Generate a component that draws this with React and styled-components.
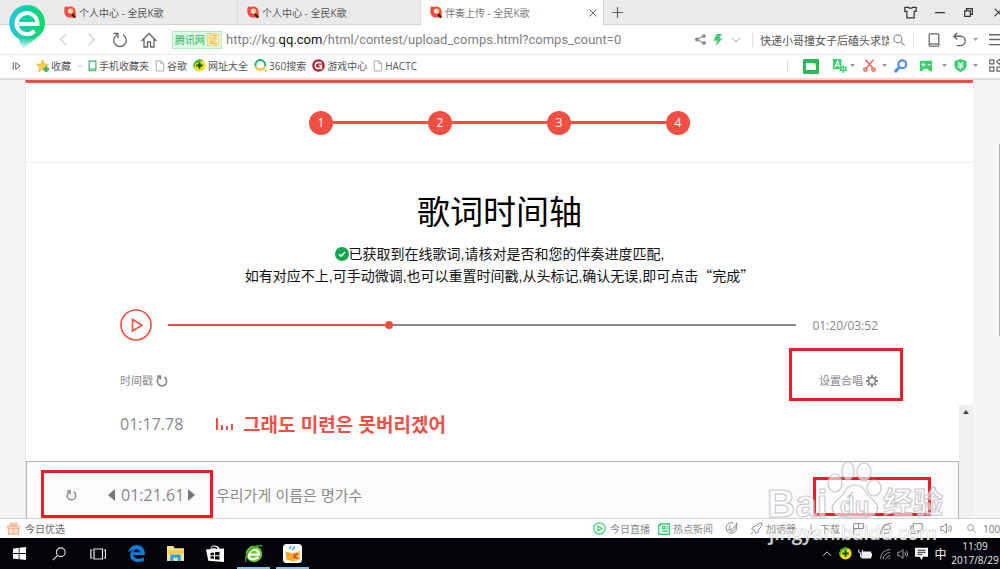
import React from "react";
import styled, { createGlobalStyle } from "styled-components";

const GlobalStyle = createGlobalStyle`
  * { box-sizing: border-box; }
  body { margin: 0; background: #fff; }
  body, button, input { font-family: "Open Sans", "Noto Sans CJK SC", sans-serif; }
  button { border: 0; padding: 0; margin: 0; background: none; color: inherit; font-size: inherit; line-height: inherit; }
  svg { display: block; flex: none; }
`;

const red = "#f14f43";
const green = "#3ccf6e";

/* ---------- shells ---------- */

const Shell = styled.div`
  position: relative;
  display: flex;
  flex-direction: column;
  height: 100vh;
  overflow: hidden;
  white-space: nowrap;
  color: #666;
`;

const Cell = styled.button`
  display: flex;
  flex: none;
  align-items: center;
  justify-content: center;
  width: ${(p) => p.$w}px;
  height: 100%;
  color: ${(p) => p.$color || "#666"};
`;

const Cropped = styled.div`
  display: flex;
  flex: none;
  width: ${(p) => p.$w}px;
  overflow: hidden;
  align-items: center;
`;

const Gap = styled.span`
  flex: none;
  width: ${(p) => p.$w}px;
`;

const Spacer = styled.div`
  flex: 1;
`;

const Divider = styled.div`
  flex: none;
  width: 1px;
  height: ${(p) => p.$h || 14}px;
  background: #dedede;
`;

const BrowserLogo = styled.div`
  position: absolute;
  left: 8px;
  top: 4px;
  z-index: 2;
`;

const TabBar = styled.nav`
  display: flex;
  flex: none;
  align-items: stretch;
  height: 25px;
  padding-left: 55px;
  background: #eaeaea;
  border-bottom: 1px solid #d2d2d2;
`;

const Tab = styled.div`
  display: flex;
  align-items: center;
  gap: 3px;
  width: 183px;
  padding: 0 5px 0 9px;
  font-size: 10px;
  color: ${(p) => (p.$active ? "#777" : "#555")};
  background: ${(p) => (p.$active ? "#fff" : "transparent")};
  border-right: 1px solid ${(p) => (p.$active ? "#d2d2d2" : "#dcdcdc")};
  margin-bottom: ${(p) => (p.$active ? "-1px" : "0")};
`;

const TabTitle = styled.span`
  flex: 1;
`;

const AddressBar = styled.header`
  display: flex;
  flex: none;
  align-items: center;
  height: 30px;
  padding-left: 50px;
  background: #fff;
  border-bottom: 1px solid #ebebeb;
`;

const SiteBadge = styled.span`
  display: flex;
  align-items: center;
  gap: 2px;
  height: 18px;
  margin: 0 4px 0 9px;
  padding: 0 2px;
  font-size: 10px;
  color: #35b26b;
  background: #dcfae2;
  border: 1px solid #b4ebc2;
`;

const Verified = styled.span`
  line-height: 11px;
  color: #e9b23c;
  background: #fff0b8;
  border: 1px solid #f3d480;
`;

const Url = styled.div`
  flex: 1;
  overflow: hidden;
  font-family: Roboto, sans-serif;
  font-size: 13px;
  line-height: 20px;
  color: #808080;
  b { font-weight: 400; color: #111; }
`;

const SearchInput = styled.input`
  width: 129px;
  margin: 0 4px 0 1px;
  padding: 0;
  border: 0;
  outline: 0;
  font-size: 11px;
  color: #555;
  background: transparent;
`;

const BookmarkBar = styled.nav`
  display: flex;
  flex: none;
  align-items: center;
  gap: 6px;
  height: 25px;
  padding: 0 0 2px 12px;
  background: #fff;
  border-bottom: 2px solid #dcdcdc;
  font-size: 10px;
`;

const Bookmark = styled.a`
  display: flex;
  align-items: center;
  gap: 2px;
  color: #555;
  text-decoration: none;
`;

const Tools = styled.div`
  display: flex;
  align-items: center;
  height: 22px;
`;

/* ---------- page ---------- */

const Viewport = styled.div`
  display: flex;
  flex: 1;
  min-height: 0;
  padding-left: 25px;
  background: #f5f5f5;
`;

const PageScroll = styled.div`
  display: flex;
  justify-content: flex-end;
  width: 27px;
  flex: none;
  padding-top: 64px;
`;

const PageThumb = styled.div`
  width: 1px;
  height: 192px;
  background: #b0b0b0;
`;

const Content = styled.main`
  display: flex;
  flex-direction: column;
  flex: 1;
  min-width: 0;
  background: #fff;
  border-top: 3px solid ${red};
  border-left: 1px solid #e8e8e8;
`;

const Steps = styled.ol`
  display: flex;
  flex: none;
  align-items: center;
  justify-content: center;
  height: 80px;
  margin: 0;
  padding: 0;
  list-style: none;
  border-bottom: 1px solid #ececec;
`;

const Step = styled.li`
  display: flex;
  align-items: center;
  &:not(:first-child)::before {
    content: "";
    width: 95px;
    height: 3px;
    background: ${red};
  }
`;

const StepDot = styled.span`
  width: 24px;
  height: 24px;
  border-radius: 12px;
  font-size: 12px;
  line-height: 24px;
  text-align: center;
  color: #fff;
  background: ${red};
`;

const Title = styled.h1`
  margin: 27px 0 10px;
  font-size: 33px;
  font-weight: 400;
  line-height: 44px;
  text-align: center;
  color: #000;
`;

const Hint = styled.p`
  margin: 0;
  font-family: "Liberation Sans", "Noto Sans CJK SC", sans-serif;
  font-size: 14px;
  line-height: 21px;
  text-align: center;
  color: #111;
  svg { display: inline-block; vertical-align: -2px; }
`;

const Quote = styled.span`
  font-family: "Noto Sans CJK SC", sans-serif;
`;

const Player = styled.div`
  display: flex;
  align-items: center;
  margin: 22px 95px 32px 94px;
  font-size: 12px;
  color: #888;
`;

const Track = styled.div`
  display: flex;
  align-items: center;
  flex: 1;
  margin: 0 16px;
  height: 8px;
`;

const Played = styled.div`
  height: 2px;
  background: ${red};
`;

const Knob = styled.div`
  width: 8px;
  height: 8px;
  border-radius: 4px;
  background: ${red};
`;

const Remaining = styled.div`
  flex: 1;
  height: 2px;
  background: #8c8c8c;
`;

const ListHead = styled.div`
  display: flex;
  justify-content: space-between;
  margin: 0 95px 16px 94px;
  font-size: 11px;
  line-height: 16px;
  color: #888;
`;

const HeadButton = styled.button`
  position: relative;
  display: flex;
  align-items: center;
  gap: 3px;
`;

const Highlight = styled.span`
  position: absolute;
  inset: ${(p) => p.$inset};
  width: ${(p) => (p.$w ? `${p.$w}px` : "auto")};
  border: 3px solid #ed1c24;
  pointer-events: none;
`;

const ListArea = styled.div`
  display: flex;
  flex: 1;
  min-height: 0;
`;

const Lyrics = styled.div`
  display: flex;
  flex-direction: column;
  flex: 1;
`;

const Scrollbar = styled.div`
  display: flex;
  justify-content: center;
  width: 14px;
  padding-top: 5px;
  background: #f0f0f0;
`;

const LyricRow = styled.div`
  display: flex;
  align-items: center;
  height: 56px;
  padding: 0 0 18px 94px;
`;

const NextRow = styled.div`
  position: relative;
  display: flex;
  flex: 1;
  align-items: center;
  padding: 10px 101px 0 39px;
  background: #fbfbfd;
  border: 1px solid #b4b4b8;
  border-bottom: 0;
`;

const Time = styled.span`
  width: ${(p) => p.$w}px;
  font-size: 16px;
  line-height: 24px;
  color: #888;
`;

const Lyric = styled.span`
  font-family: "Noto Sans CJK KR", sans-serif;
  font-size: ${(p) => (p.$current ? 19 : 15)}px;
  font-weight: ${(p) => (p.$current ? 700 : 400)};
  line-height: 24px;
  margin-left: ${(p) => (p.$current ? 10 : 21)}px;
  color: ${(p) => (p.$current ? red : "#8a8a8a")};
  flex: 1;
`;

/* ---------- bottom bars ---------- */

const StatusBar = styled.footer`
  display: flex;
  flex: none;
  align-items: center;
  height: 20px;
  padding-left: 7px;
  background: #fff;
  border-top: 1px solid #d4d4d4;
  font-size: 10px;
  color: #777;
`;

const StatusItem = styled.button`
  display: flex;
  align-items: center;
  gap: ${(p) => p.$gap || 4}px;
  margin-right: ${(p) => p.$after || 0}px;
  color: ${(p) => p.$color || "#888"};
`;

const Taskbar = styled.footer`
  display: flex;
  flex: none;
  align-items: stretch;
  height: 31px;
  background: #02040a;
  color: #e8e8e8;
  font-size: 12px;
`;

const TaskButton = styled.button`
  display: flex;
  align-items: center;
  justify-content: center;
  width: 39px;
  position: relative;
  &::after {
    content: "";
    display: ${(p) => (p.$open ? "block" : "none")};
    position: absolute;
    left: 3px;
    right: 3px;
    bottom: 0;
    height: 2px;
    background: #86bfe8;
  }
`;

const Clock = styled.div`
  flex: none;
  width: 50px;
  padding: 1px 0;
  display: flex;
  flex-direction: column;
  align-items: center;
  font-size: 10px;
  line-height: 14px;
`;

const Watermark = styled.div`
  position: absolute;
  right: 50px;
  bottom: 18px;
  pointer-events: none;
`;

/* ---------- icons ---------- */

function Icon({ w = 16, h, box = 16, sw = 1.2, fill = "none", children }) {
  return (
    <svg width={w} height={h || w} viewBox={`0 0 ${box} ${h && box === 16 ? (16 * h) / w : box}`} fill={fill}
      stroke={fill === "none" ? "currentColor" : "none"} strokeWidth={sw} aria-hidden="true">
      {children}
    </svg>
  );
}

const Caret = () => (
  <svg width="5" height="3" viewBox="0 0 5 3" aria-hidden="true"><path d="M0 0h5L2.500 3z" fill="#999" /></svg>
);

const Favicon = () => (
  <svg width="12" height="13" viewBox="0 0 12 13" aria-hidden="true">
    <path d="M1 0.500Q4 1 7 .5Q11 1 11.500 5L12 12L7 11.500Q1 12 .3 6Q0 3 1 .5Z" fill="#ee4c41" />
    <circle cx="6.500" cy="5" r="2.600" fill="#ffe6da" />
    <circle cx="7.800" cy="4.500" r="1.600" fill="#f7c93d" />
    <path d="M8 8l3 3.500" stroke="#43201e" strokeWidth="2" />
  </svg>
);

const Doc = () => (
  <Icon w={10} h={12} sw={1.3}><path d="M2 1.500h7.500l4.500 4.500v11.500H2zM9.500 1.500V6H14" stroke="#999" /></Icon>
);

const Chevron = ({ w = 10, dir = "down" }) => (
  <Icon w={w} box={16} sw={1.5}>
    <path d={{ down: "M1.500 4.500L8 11l6.500-6.500", left: "M11.500 1L4.500 8l7 7", right: "M4.500 1l7 7-7 7", up: "M1.500 11L8 4.500l6.500 6.500" }[dir]} />
  </Icon>
);

const Magnifier = ({ w = 12 }) => (
  <Icon w={w} sw={1.5}><circle cx="6.500" cy="6.500" r="5.300" /><path d="M10.500 10.500l5 5" /></Icon>
);

const Reload = ({ w = 12, sw = 2 }) => (
  <Icon w={w} sw={sw}><path d="M11 2.700A6.300 6.300 0 1 1 5 2.700M1.500 1.500H6v4.500" /></Icon>
);

const Plus360 = ({ w = 13 }) => (
  <svg width={w} height={w} viewBox="0 0 16 16" aria-hidden="true">
    <circle cx="8" cy="8" r="7.500" fill="#f9dc18" />
    <path d="M13 2.500A7.500 7.500 0 0 0 2 12.500Q1 6 6 4T13 2.500Z" fill="#38b435" />
    <path d="M8 4v8M4 8h8" stroke="#075b16" strokeWidth="2.400" />
  </svg>
);

const Gear = () => (
  <Icon w={12}>
    <circle cx="8" cy="8" r="4.500" strokeWidth="2.200" />
    <path d="M8 0v3M8 13v3M0 8h3M13 8h3M2.300 2.300l2.200 2.200M11.500 11.500l2.200 2.200M2.300 13.700l2.200-2.200M11.500 4.500l2.200-2.200" strokeWidth="2.800" />
  </Icon>
);

const Speaker = ({ w = 13 }) => (
  <Icon w={w}><path d="M1 5.500h3L8 2v12l-4-3.500H1zM10.500 5.500q2 2.500 0 5M12.500 3.500q3.500 4.500 0 9" /></Icon>
);

const Shirt = () => (
  <Icon w={13} sw={1.5}><path d="M5 1.500q3 2.500 6 0l4 .5v4.500h-2.500v8h-9v-8H1V2z" /></Icon>
);

const Bars = () => (
  <svg width="18" height="14" viewBox="0 0 18 14" aria-hidden="true">
    <path d="M2 1v12M7 8v5M12 9v4M17 7v6" stroke={red} strokeWidth="2" />
  </svg>
);

const Triangle = ({ right }) => (
  <svg width="7" height="12" viewBox="0 0 7 12" aria-hidden="true"><path d={right ? "M0 0v12l7-6z" : "M7 0v12L0 6z"} fill="#777" /></svg>
);

const tabs = ["个人中心 - 全民K歌", "个人中心 - 全民K歌", "伴奏上传 - 全民K歌"];

export default function App() {
  return (
    <Shell>
      <GlobalStyle />

      <BrowserLogo>
        <svg width="38" height="45" viewBox="0 0 38 45" role="img" aria-label="360">
          <defs>
            <linearGradient id="pin" x1="0" y1="0.400" x2="1" y2="0.500">
              <stop offset="0" stopColor="#25c6df" /><stop offset=".6" stopColor="#12d295" /><stop offset="1" stopColor="#08dc63" />
            </linearGradient>
            <linearGradient id="tail" x1="0" y1="0" x2="0" y2="1">
              <stop offset=".75" stopColor="#fff" /><stop offset="1" stopColor="#fff" stopOpacity="0" />
            </linearGradient>
            <mask id="fade"><rect width="38" height="45" fill="url(#tail)" /></mask>
          </defs>
          <path mask="url(#fade)" d="M19 1a18 18 0 0 1 18 18q0 7-5 12L15 45Q12 40 11 35A18 18 0 0 1 19 1z" fill="url(#pin)" />
          <path d="M11 20H29.500A10.500 10.500 0 1 0 26.500 27" fill="none" stroke="#fff" strokeWidth="4" />
        </svg>
      </BrowserLogo>

      <TabBar>
        {tabs.map((title, i) => (
          <Tab key={i} $active={i === 2}>
            <Favicon />
            <TabTitle>{title}</TabTitle>
            {i === 2 && (
              <Cell $w={11} aria-label="关闭标签"><Icon w={8} sw={2}><path d="M1 1l14 14M15 1L1 15" /></Icon></Cell>
            )}
          </Tab>
        ))}
        <Cell $w={26} aria-label="新标签"><Icon w={11} sw={1.8}><path d="M8 0v16M0 8h16" /></Icon></Cell>
        <Spacer />
        <Cell $w={29} $color="#333" aria-label="皮肤"><Shirt /></Cell>
        <Cell $w={29} $color="#333" aria-label="最小化"><Icon w={10} sw={2}><path d="M0 9h16" /></Icon></Cell>
        <Cell $w={29} $color="#333" aria-label="还原"><Icon w={9} sw={2.2}><path d="M1.200 5h10v10h-10zM4.500 5V1.200h10.300v10h-3.500" /></Icon></Cell>
        <Cropped $w={17}>
          <Cell $w={30} $color="#333" aria-label="关闭"><Icon w={9} sw={2}><path d="M1 1l14 14M15 1L1 15" /></Icon></Cell>
        </Cropped>
      </TabBar>

      <AddressBar>
        <Cell $w={27} $color="#ccc" aria-label="后退"><Chevron w={13} dir="left" /></Cell>
        <Cell $w={28} $color="#ccc" aria-label="前进"><Chevron w={13} dir="right" /></Cell>
        <Cell $w={30} aria-label="刷新"><Reload w={16} sw={1.300} /></Cell>
        <Cell $w={28} aria-label="主页"><Icon w={16} sw={1.3}><path d="M.5 9L8 1.500 15.500 9M3 7v8h3.500v-5h3v5H13V7" /></Icon></Cell>
        <SiteBadge>腾讯网<Verified>证</Verified></SiteBadge>
        <Url role="textbox" aria-label="网址" tabIndex={0}>http://kg.<b>qq.com</b>/html/contest/upload_comps.html?comps_count=0</Url>
        <Cell $w={18} $color="#888" aria-label="分享">
          <Icon w={11} fill="currentColor"><path d="M3 8L13 2.500M3 8l10 5.500" stroke="currentColor" strokeWidth="1.500" /><circle cx="3" cy="8" r="3" /><circle cx="13" cy="3" r="2.700" /><circle cx="13" cy="13" r="2.700" /></Icon>
        </Cell>
        <Cell $w={18} $color={green} aria-label="极速模式"><Icon w={12} fill="currentColor"><path d="M6 0h7l-3 6h4L5 16l2-7H2z" /></Icon></Cell>
        <Cell $w={18} $color="#999" aria-label="更多"><Chevron w={10} /></Cell>
        <Cell as="span" $w={14}><Divider /></Cell>
        <SearchInput aria-label="搜索" defaultValue="快递小哥撞女子后磕头求饶" />
        <Cell $w={12} $color="#888" aria-label="搜索"><Magnifier w={12} /></Cell>
        <Cell as="span" $w={17}><Divider /></Cell>
        <Cell $w={24} aria-label="手机"><Icon w={14} sw={1.4}><rect x="2.500" y="1" width="11" height="14" rx="1" /><path d="M2.500 12.500h11" /></Icon></Cell>
        <Cell $w={27} aria-label="撤销">
          <Icon w={15} sw={1.5}><path d="M5.500 1L2 4.500 5.500 8M2 4.500h7a5 5 0 0 1 0 10H5" /></Icon>
        </Cell>
        <Caret />
        <Cropped $w={22}><Cell $w={36} aria-label="菜单"><Icon w={15} sw={1.500}><path d="M0 3h16M0 8h16M0 13.500h16" /></Icon></Cell></Cropped>
      </AddressBar>

      <BookmarkBar>
        <Cell $w={10} aria-label="侧栏"><Icon w={10} sw={1.600}><path d="M2 2v12M6 2.500l7 5.500-7 5.500z" /></Icon></Cell>
        <Gap $w={2} />
        <Bookmark href="#fav">
          <svg width="13" height="13" viewBox="0 0 16 16" aria-hidden="true">
            <path d="M8 1l2 5 5.500.5-4 4 1 5L8 13l-4.500 2.500 1-5-4-4L6 6z" fill="#fbd04c" stroke="#eeb52d" />
            <path d="M12.500 9v7M9 12.500h7" stroke="#39b86a" strokeWidth="3" />
          </svg>
          收藏
        </Bookmark>
        <Cell $w={5} $color="#999" aria-label="展开收藏"><Chevron w={6} /></Cell>
        <Bookmark href="#mobile"><Icon w={9} h={12} sw={2}><path d="M2 2h12v17H2zM2 16h12" stroke="#35ae6c" /></Icon>手机收藏夹</Bookmark>
        <Bookmark href="#google"><Doc />谷歌</Bookmark>
        <Bookmark href="#sites"><Plus360 />网址大全</Bookmark>
        <Bookmark href="#so">
          <svg width="13" height="13" viewBox="0 0 16 16" fill="none" strokeWidth="2.500" aria-hidden="true">
            <path d="M13.500 9A6 6 0 1 0 2 9" stroke="#22b573" /><path d="M2 9a6 6 0 0 0 11.500 0" stroke="#f8be19" /><circle cx="14.500" cy="14.500" r="1.300" fill="#f8be19" />
          </svg>
          360搜索
        </Bookmark>
        <Bookmark href="#game">
          <svg width="13" height="13" viewBox="0 0 16 16" fill="none" aria-hidden="true">
            <circle cx="8" cy="8" r="7.700" fill="#b51e2b" /><path d="M12 4.500H6Q4 5 4 8t2 3.500h5.500V8H8" stroke="#fff" strokeWidth="2" />
          </svg>
          游戏中心
        </Bookmark>
        <Bookmark href="#hactc"><Doc />HACTC</Bookmark>
        <Spacer />
        <Tools>
          <Divider $h={12} />
          <Cell $w={46} $color={green} aria-label="便签">
            <Icon w={16} fill="currentColor"><rect y="1" width="16" height="15" rx="1" fill="#2fb65b" /><path d="M3 5h10v7H3z" fill="#f3fff3" /><path d="M10 5h3v3z" fill="#f3c645" /></Icon>
          </Cell>
          <Cell $w={10} $color={green} aria-label="翻译">
            <Icon w={15} fill="currentColor"><path d="M1 1h9v11H1z" /><path d="M3 10l3-7 2 7M4 8h3" stroke="#fff" fill="none" /><path d="M9 10h6v3H9zM12 8v8" stroke="currentColor" fill="none" strokeWidth="1.500" /></Icon>
          </Cell>
          <Cell $w={17}><Caret /></Cell>
          <Cell $w={16} $color="#f2665e" aria-label="截图"><Icon w={13} sw={2}><path d="M3 1l9 10M13 1L4 11" /><circle cx="3" cy="13" r="2" /><circle cx="13" cy="13" r="2" /></Icon></Cell>
          <Cell $w={15}><Caret /></Cell>
          <Cell $w={18} $color="#4f8ff0" aria-label="查找"><Icon w={14} sw={2.500}><circle cx="9.500" cy="6" r="4.500" /><path d="M6 9.500L1 15" strokeWidth="3.500" /></Icon></Cell>
          <Cell $w={32} $color={green} aria-label="游戏"><Icon w={14} fill="currentColor"><path d="M1 2h14v12h-3l-2-3H6l-2 3H1z" /><path d="M3 6.500h4M5 4.500v4M10 6.500h3" stroke="#fff" strokeWidth="1.500" /></Icon></Cell>
          <Caret />
          <Cell $w={26} $color={green} aria-label="安全"><Icon w={13} fill="currentColor"><path d="M8 0l7.500 2.500v6Q14 14 8 16 2 14 .5 8.500v-6z" /><path d="M5 3.500l3 3.500 3-3.500M4.500 7.500h7M4.500 10h7M8 7v6" stroke="#fff" strokeWidth="1.300" fill="none" /></Icon></Cell>
          <Caret />
          <Cropped $w={22}><Cell $w={34} aria-label="应用"><Icon w={13} sw={1.500}><path d="M1 1h5v5H1zM1 10h5v5H1zM10 10h5v5h-5zM12.500 .5l3 3-3 3-3-3z" /></Icon></Cell></Cropped>
        </Tools>
      </BookmarkBar>

      <Viewport>
        <Content>
          <Steps>
            {[1, 2, 3, 4].map((n) => <Step key={n}><StepDot>{n}</StepDot></Step>)}
          </Steps>
          <Title>歌词时间轴</Title>
          <Hint>
            <svg width="14" height="14" viewBox="0 0 14 14" aria-hidden="true"><circle cx="7" cy="7" r="7" fill="#13a650" /><path d="M4 7.200l2 2L10 5" fill="none" stroke="#fff" strokeWidth="1.500" /></svg>
            已获取到在线歌词,请核对是否和您的伴奏进度匹配,<br />
            如有对应不上,可手动微调,也可以重置时间戳,从头标记,确认无误,即可点击<Quote>“完成”</Quote>
          </Hint>
          <Player>
            <button aria-label="播放">
              <svg width="32" height="32" viewBox="0 0 32 32" fill="none" stroke={red} strokeWidth="1.600" aria-hidden="true">
                <circle cx="16" cy="16" r="15" /><path d="M12.500 10.500v11.500l9.500-5.700z" />
              </svg>
            </button>
            <Track role="progressbar" aria-label="播放进度" aria-valuenow={80} aria-valuemax={232}>
              <Played style={{ width: `${(80 / 232) * 100}%` }} />
              <Knob />
              <Remaining />
            </Track>
            01:20/03:52
          </Player>
          <ListHead>
            <HeadButton>时间戳 <Reload w={12} sw={2.200} /></HeadButton>
            <HeadButton>设置合唱 <Gear /><Highlight $inset="-25px -25px -12px -30px" /></HeadButton>
          </ListHead>
          <ListArea>
            <Lyrics>
              <LyricRow>
                <Time $w={95}>01:17.78</Time>
                <Bars />
                <Lyric $current lang="ko">그래도 미련은 못버리겠어</Lyric>
              </LyricRow>
              <NextRow>
                <Cell $w={10} $color="#888" aria-label="重置"><Reload w={11} sw={2} /></Cell>
                <Gap $w={32} />
                <Cell $w={7} aria-label="提前"><Triangle /></Cell>
                <Gap $w={6} />
                <Time $w={67}>01:21.61</Time>
                <Cell $w={7} aria-label="延后"><Triangle right /></Cell>
                <Lyric lang="ko">우리가게 이름은 명가수</Lyric>
                <Cell $w={14} $color="#777" aria-label="编辑"><Icon w={8} sw={3}><path d="M2 14L14 2" /></Icon></Cell>
                <Highlight $inset="8px auto 0 14px" $w={172} />
                <Highlight $inset="15px 27px 2px auto" $w={118} />
              </NextRow>
            </Lyrics>
            <Scrollbar><svg width="6" height="4" viewBox="0 0 6 4" aria-hidden="true"><path d="M3 0l3 4H0z" fill="#444" /></svg></Scrollbar>
          </ListArea>
        </Content>
        <PageScroll><PageThumb /></PageScroll>
      </Viewport>

      <StatusBar>
        <StatusItem $gap={5} $color="#666">
          <Icon w={13} sw={1.500}><path d="M1 5h14v3H1zM2 8h12v7H2zM8 5v10M8 5Q3 4 4 1.500 7 0 8 5q1-5 4-3.500Q13 4 8 5" stroke="#f6b58f" fill="#fde3d3" /></Icon>
          今日优选
        </StatusItem>
        <Spacer />
        <StatusItem $after={8}><Icon w={13} sw={1.500}><circle cx="8" cy="8" r="7" stroke={green} /><path d="M6 5v6l5-3z" stroke={green} /></Icon>今日直播</StatusItem>
        <StatusItem $gap={3} $after={12}><Icon w={12} sw={1.800}><path d="M1 3h2V1h12v14H1zM6 4.500h3v3H6zM11 5h2M11 7.500h2M5.500 11h7.500" stroke={green} /></Icon>热点新闻</StatusItem>
        <StatusItem $after={12} aria-label="加速"><Icon w={13}><path d="M14 5a6.500 6.500 0 1 1-3-3.500M3 10q7 0 12-9-1 9-8 11M6 4q-2 4 2 7" /></Icon></StatusItem>
        <StatusItem $gap={3} $after={9}><Icon w={13}><path d="M5 10L2 9q1-4 5-4 3-4 8-4 0 5-4 8 0 4-4 5l-1-3zM4 12l-3 3M10 5.500h1" /></Icon>加速器</StatusItem>
        <StatusItem $gap={3} $after={12}><Icon w={12}><path d="M8 1v14M3 10l5 5 5-5" /></Icon>下载</StatusItem>
        <StatusItem $after={15} aria-label="标记"><Icon w={13}><path d="M2 15V2h12v6H2M8 2v6" /></Icon></StatusItem>
        <StatusItem $after={17} aria-label="内核"><Icon w={13}><path d="M3 9h10q0-6-5-6T3 9t5 5l4-2M1 15Q0 9 7 4q6-4 8-1" /></Icon></StatusItem>
        <StatusItem $after={17} aria-label="窗口"><Icon w={13}><path d="M4 2h11v9H4zM4 5H1v9h9v-3" /></Icon></StatusItem>
        <StatusItem $after={14} aria-label="声音"><Speaker /></StatusItem>
        <StatusItem aria-label="缩放"><Magnifier w={9} /></StatusItem>
        <Gap $w={7} />
        <Cropped $w={17}>100%</Cropped>
      </StatusBar>

      <Taskbar>
        <TaskButton aria-label="开始"><Icon w={13} fill="#fff"><path d="M0 2l7-1v6.500H0zM8 1l8-1v7.500H8zM0 8.500h7V15l-7-1zM8 8.500h8V16l-8-1z" /></Icon></TaskButton>
        <TaskButton aria-label="搜索"><Icon w={14}><circle cx="10" cy="6" r="5" /><path d="M6.500 9.500L1 15" /></Icon></TaskButton>
        <TaskButton aria-label="任务视图"><Icon w={16}><path d="M4 3h8.500v10H4zM2.500 4H.8v8h1.700M14 4h1.500v8H14" /></Icon></TaskButton>
        <TaskButton aria-label="Edge">
          <Icon w={17} fill="#0c7fdc"><path d="M0 7Q2 0 8.500 0 16 .5 16 9.500H5q.5 3.500 5 3.500 2.500 0 5-1.500V15q-2.500 1-6 1-7-.5-7-6.500Q2 6 5.500 4.500 2 5 0 7zM5.200 6.800h6Q11 4 8.300 4 5.500 4.300 5.200 6.800z" fillRule="evenodd" /></Icon>
        </TaskButton>
        <TaskButton aria-label="文件资源管理器">
          <Icon w={17} fill="#fce08a"><path d="M0 1h6l1 2h9v12H0z" /><path d="M1 5h15v3H1z" fill="#f5c84c" /><path d="M3 15V9h10v6h-3v-3H6v3z" fill="#2ba5e0" /></Icon>
        </TaskButton>
        <TaskButton aria-label="应用商店">
          <Icon w={18} fill="#fff"><path d="M0 4l16-1v12L2 14zM4 4q0-4 4-3.500T12 4" /><path d="M5 3q1-2 5 0" stroke="#02040a" fill="none" /><path d="M4 7l3-.3v2.500H4zM8 6.500l4-.4v3H8zM4 10h3v2.500L4 12zM8 10h4v3l-4-.4z" fill="#02040a" /></Icon>
        </TaskButton>
        <TaskButton $open aria-label="360浏览器">
          <Icon w={18} fill="#6cc62d"><circle cx="8" cy="8" r="7.300" /><path d="M3.500 8.500h9Q12 4 8 4T3.500 8.500 8 12.500l4-1.500" stroke="#fff" strokeWidth="2" fill="none" /><path d="M.5 15Q0 8 6 3.500T15.500 1" stroke="#3d9f1e" strokeWidth="1.400" fill="none" /></Icon>
        </TaskButton>
        <TaskButton $open aria-label="全民K歌">
          <Icon w={19} fill="#fff"><rect width="16" height="16" rx="3" /><path d="M2 6l6 2 6-2v7l-5 2-6-2z" fill="#f9a826" /><path d="M8 8l5-2v7l-4 2z" fill="#f7c65a" /><path d="M5 4l2-2M8 5l2-3" stroke="#4bb9e5" strokeWidth="1.500" /><path d="M9.500 8v4.500M12.500 8l-3 2.500 3 2" stroke="#e8502d" strokeWidth="1.500" fill="none" /></Icon>
        </TaskButton>
        <Spacer />
        <Cell $w={19} $color="#ddd" aria-label="更多图标"><Chevron w={10} dir="up" /></Cell>
        <Cell $w={19} aria-label="360安全"><Plus360 w={13} /></Cell>
        <Cell $w={20} $color="#eee" aria-label="电源"><Icon w={14} fill="currentColor"><path d="M5 5h10v8H4V9M15 7h1v4h-1z" /><path d="M1 3v3q2 2 4 0V3M3 7v4h3" stroke="currentColor" fill="none" /></Icon></Cell>
        <Cell $w={19} $color="#aaa" aria-label="网络"><Icon w={12}><path d="M2 15Q2 3 15 2M5.500 15Q6 7 15 6M9 15q1-4 6-5M12.500 15q1-2 2.500-1.500" /></Icon></Cell>
        <Cell $w={18} $color="#aaa" aria-label="音量"><Speaker w={12} /></Cell>
        <Cell $w={19} $color="#fff" aria-label="通知"><Icon w={13} fill="currentColor"><path d="M0 1h16v11h-6l-2 4-2-4H0z" /><path d="M3 4h10M3 6.500h10M3 9h6" stroke="#222" /></Icon></Cell>
        <Cell $w={19} $color="#fff">中</Cell>
        <Clock><span>11:09</span><span>2017/8/29</span></Clock>
      </Taskbar>

      <Watermark>
        <svg width="184" height="90" viewBox="0 0 184 90" aria-hidden="true">
          <g fill="#fff" fillOpacity=".6" stroke="#b4b4b8" strokeOpacity=".7" strokeWidth="1.200">
            <ellipse cx="69" cy="22" rx="7" ry="9" />
            <ellipse cx="82" cy="10" rx="6" ry="9" />
            <ellipse cx="98" cy="11" rx="7" ry="9" />
            <ellipse cx="108" cy="27" rx="7" ry="8" />
            <path d="M89 24q8 0 11 8 3 4 8 8 7 7 1 13-4 4-20 3-16 1-20-3-6-6 1-13 5-4 8-8 3-8 11-8z" />
            <g fontFamily="Liberation Sans, Noto Sans CJK SC, sans-serif" fontWeight="700">
              <text x="1" y="56" fontSize="39">Bai</text>
              <text x="74" y="53" fontSize="24">du</text>
              <text x="117" y="52" fontSize="30">经验</text>
            </g>
          </g>
          <text x="3" y="79" fontFamily="Open Sans, sans-serif" fontWeight="600" fontSize="19" fill="#fff" fillOpacity=".85" stroke="#999" strokeOpacity=".5" strokeWidth=".6">jingyan.baidu.com</text>
        </svg>
      </Watermark>
    </Shell>
  );
}
